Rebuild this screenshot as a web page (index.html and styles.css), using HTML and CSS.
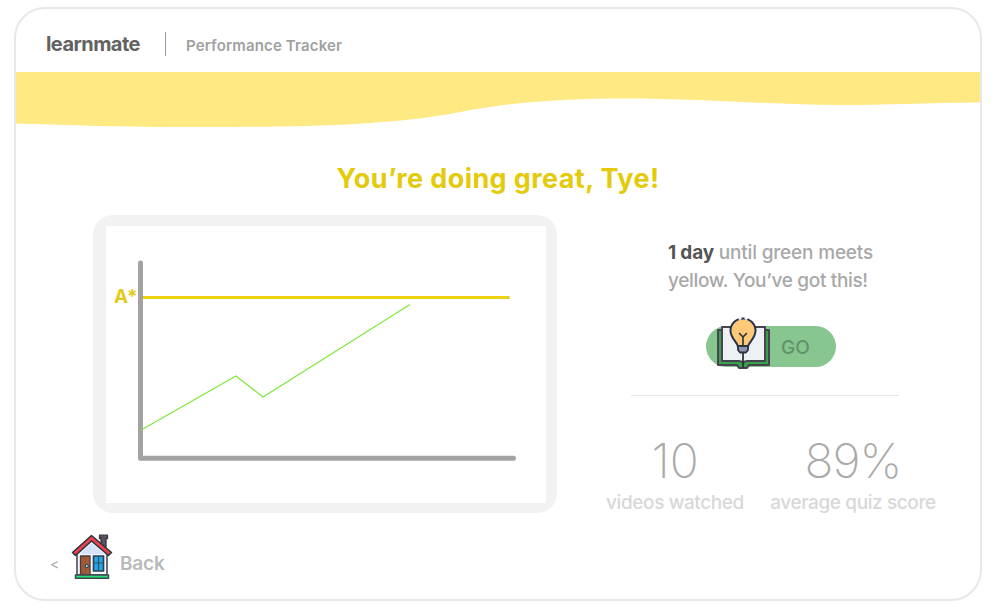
FILE: index.html
```html
<!DOCTYPE html>
<html lang="en">
<head>
<meta charset="utf-8">
<title>learnmate – Performance Tracker</title>
<link rel="stylesheet" href="styles.css">
</head>
<body>
<div class="app">
  <header class="header">
    <span class="brand">learnmate</span>
    <span class="divider"></span>
    <span class="section">Performance Tracker</span>
  </header>
  <svg class="wave" viewBox="0 0 964 56" width="964" height="56"><path fill="#fee983" d="M0 0H964V30.500C914 31 865 33 824 33C760 33 690 26.500 610 26.500C550 26.500 490 30 442 40.500C360 56 250 55 164 55C100 55 40 52.500 0 51.500Z"/></svg>
  <h1 class="title">You’re doing great, Tye!</h1>
  <main class="main">
    <section class="chart-card">
      <svg class="chart" viewBox="106 226 440 277" width="440" height="277">
        <path d="M140.500 263V458.300H513.500" fill="none" stroke="#a2a2a2" stroke-width="5" stroke-linecap="round" stroke-linejoin="round"/>
        <path d="M143 297.500H508.500" stroke="#edd212" stroke-width="3"/>
        <circle cx="508.500" cy="297.500" r="1.500" fill="#e4cb1d"/>
        <path d="M142 429.500L236 376L263 397L410 304.500" fill="none" stroke="#82e83c" stroke-width="1.300"/>
        <text class="grade" x="114" y="303">A*</text>
      </svg>
    </section>
    <aside class="side">
      <p class="message"><strong>1 day</strong> until green meets<br><span class="second-line">yellow. You’ve got this!</span></p>
      <div class="go">
        <svg class="book" viewBox="0 0 54 54" width="54" height="54" stroke-linejoin="round" stroke-linecap="round">
          <path d="M2 14H53V49H33L31 52H23L21 49H2Z" fill="#38a24b" stroke="#474350" stroke-width="2"/>
          <path d="M6 11H49V45H31Q28 45 27 47Q26 45 23 45H6Z" fill="#edf1f3" stroke="#474350" stroke-width="2"/>
          <path d="M27 34V51" stroke="#34313b" stroke-width="1.800"/>
          <path d="M22 31C22 26 14.500 23 14.500 14.500A12.500 12 0 0 1 39.500 14.500C39.500 23 32 26 32 31Z" fill="#ffc978" stroke="#26334b" stroke-width="2"/>
          <path d="M27 32V21L23.500 17.500M27 21L30.500 17.500" fill="none" stroke="#29303a" stroke-width="1.600"/>
          <path d="M22 30H32V34L30 36.500H24L22 34Z" fill="#8e98ae" stroke="#2d3545" stroke-width="1.800"/>
          <path d="M23.500 2.800L24.500 2.500M29.500 2.500L30.500 2.800" stroke="#fff" stroke-width="2.200"/>
        </svg>
        <span class="go-label">GO</span>
      </div>
      <hr class="rule">
      <div class="stats">
        <div class="stat stat-videos"><div class="num">10</div><div class="cap">videos watched</div></div>
        <div class="stat stat-score"><div class="num num-score">89%</div><div class="cap">average quiz score</div></div>
      </div>
    </aside>
  </main>
  <footer class="footer">
    <span class="chevron">&lt;</span>
    <svg class="house" viewBox="0 0 42 46" width="42" height="46" stroke-linejoin="round">
      <path d="M28.500 4V1.200H36.500V4.500H35V16L30 12V4.500H28.500Z" fill="#5b5261" stroke="#393540" stroke-width="1.300"/>
      <path d="M6 19L20.500 6L36 19V41H6Z" fill="#f0f4fb" stroke="#4e4b57" stroke-width="1.600"/>
      <path d="M9 20L20.500 9L33 20Z" fill="#d5e3fa"/>
      <path d="M1.500 18.500L20.500 1.500L40.500 18.500L37.500 21.500L20.500 7L4.500 21.500Z" fill="#ef3e50" stroke="#24383c" stroke-width="1.500"/>
      <path d="M9.500 22H19V41H9.500Z" fill="#a65d3a" stroke="#493b3c" stroke-width="1.300"/>
      <path d="M12 23V40M14.500 23V40" stroke="#854a35" stroke-width=".6"/>
      <circle cx="15.800" cy="32" r="1.600" fill="#a9dce8" stroke="#213e4c"/>
      <path d="M22.500 22H32.500V37H22.500Z" fill="#24a5e7" stroke="#293f50" stroke-width="1.600"/>
      <path d="M27.500 22V37M22.500 29H32.500" stroke="#315064" stroke-width="1.200"/>
      <path d="M4.500 41H37.500V44.300H4.500Z" fill="#25e178" stroke="#414650" stroke-width="1.500"/>
    </svg>
    <span class="back">Back</span>
  </footer>
</div>
</body>
</html>
```
FILE: styles.css
```css
* { box-sizing: border-box; }
body { margin: 0; background: #fff; font-family: Inter, "Liberation Sans", sans-serif; overflow: hidden; }
.app { width: 968px; height: 594px; margin: 7px 0 0 14px; border: 2px solid #e8e8e8; border-radius: 31px; overflow: hidden; display: flex; flex-direction: column; }
.header { height: 63px; flex: none; display: flex; align-items: center; padding: 6px 0 0 30px; }
.brand { width: 119px; font-size: 20px; font-weight: 700; color: #626262; letter-spacing: -0.55px; }
.divider { width: 1px; height: 24px; background: #999; margin-right: 20px; }
.section { font-size: 15px; font-weight: 600; color: #a1a1a1; letter-spacing: 0.15px; padding-top: 3px; }
.wave { display: block; flex: none; }
.title { margin: 31px 0 0; height: 40px; line-height: 40px; text-align: center; font-size: 27px; font-weight: 700; color: #e3cb0b; flex: none; letter-spacing: 0.4px; }
.main { display: flex; margin-top: 16px; height: 298px; flex: none; }
.chart-card { width: 464px; height: 298px; margin-left: 77px; border-radius: 20px; background: #f2f2f2; padding: 11px 12px 0 13px; }
.chart { display: block; background: #fff; }
.grade { font-size: 19px; font-weight: 700; fill: #e3cb1b; letter-spacing: 0.5px; }
.side { width: 364px; margin-left: 40px; }
.message { margin: 24px 0 0 71px; font-size: 19px; font-weight: 500; line-height: 28px; color: #a8a8a8; white-space: nowrap; letter-spacing: -0.18px; }
.message strong { font-weight: 700; color: #555; }
.second-line { letter-spacing: -0.34px; }
.go { display: flex; align-items: center; width: 130px; height: 41px; margin: 31px 0 0 109px; border-radius: 21px; background: #87c68f; }
.book { flex: none; margin: -8px 11px 0 10px; overflow: visible; }
.go-label { font-size: 19px; font-weight: 500; color: #62926a; padding-top: 1px; }
.rule { width: 268px; height: 1px; border: 0; background: #e4e4e4; margin: 28px 0 0 34px; }
.stats { display: flex; margin-top: 36px; gap: 17px; }
.stat { text-align: center; white-space: nowrap; flex: none; }
.stat-videos { width: 156px; }
.stat-score { width: 166px; }
.num { height: 59px; line-height: 58px; font-size: 48px; font-weight: 200; color: #aaa; }
.num-score { letter-spacing: -1px; }
.cap { height: 24px; line-height: 24px; font-size: 19px; font-weight: 500; color: #d8d8d8; letter-spacing: -0.4px; }
.footer { display: flex; align-items: center; height: 46px; margin: 21px 0 0 34px; }
.chevron { width: 21px; font-size: 14px; color: #aaa; padding-top: 13px; }
.house { flex: none; margin-right: 7px; }
.back { font-size: 19px; font-weight: 600; color: #b9b9b9; padding-top: 13px; letter-spacing: -0.2px; }
```
